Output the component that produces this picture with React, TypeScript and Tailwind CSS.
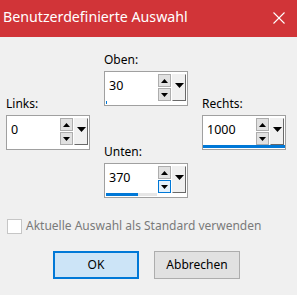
import React from "react";

const font = { fontFamily: '"Noto Sans", "Open Sans", sans-serif' };

function UpTri() {
  return (
    <svg width="7" height="4" viewBox="0 0 7 4">
      <polygon points="0,4 7,4 3.5,0" fill="#000" />
    </svg>
  );
}
function DownTri() {
  return (
    <svg width="7" height="4" viewBox="0 0 7 4">
      <polygon points="0,0 7,0 3.5,4" fill="#000" />
    </svg>
  );
}
function BigDownTri() {
  return (
    <svg width="9" height="5" viewBox="0 0 9 5">
      <polygon points="0,0 9,0 4.5,5" fill="#000" />
    </svg>
  );
}

type SpinProps = {
  label: string;
  value: string;
  bar: "none" | "tiny" | "partial" | "full";
  hoverDown?: boolean;
};

function Spin({ label, value, bar, hoverDown }: SpinProps) {
  return (
    <div className="flex flex-col w-[84px]">
      <div className="h-[15px] leading-[15px] text-[12px] text-black mb-[4px]">{label}</div>
      <div className="h-[35px] border border-[#a0a0a0] bg-white flex flex-col">
        <div className="flex flex-row pt-[2px] h-[29px]">
          <div className="flex-1 flex items-center pl-[4px] text-[12.5px] text-black leading-none pb-[2px]">
            {value}
          </div>
          <div className="flex flex-col gap-[1px] w-[13px]">
            <div className="h-[13px] bg-[#e1e1e1] border border-[#adadad] flex items-center justify-center">
              <UpTri />
            </div>
            <div
              className={
                hoverDown
                  ? "h-[13px] bg-[#e5f1fb] border border-[#0078d7] flex items-center justify-center"
                  : "h-[13px] bg-[#e1e1e1] border border-[#adadad] flex items-center justify-center"
              }
            >
              <DownTri />
            </div>
          </div>
          <div className="w-[14px] h-[27px] ml-[1px] mr-[1px] bg-[#f0f0f0] border-r border-b border-r-[#696969] border-b-[#696969] border-l border-t border-l-[#f0f0f0] border-t-[#f0f0f0] flex justify-center pt-[8px]">
            <BigDownTri />
          </div>
        </div>
        <div className="h-[3px] flex flex-row">
          {bar === "full" && <div className="flex-1 bg-[#0078d7]" />}
          {bar === "partial" && (
            <div className="w-[51px] flex flex-row ml-[1px]">
              <div className="w-[32px] bg-[#0078d7]" />
              <div className="flex-1 bg-[#e6e6e6]" />
            </div>
          )}
          {bar === "tiny" && <div className="w-[1px] ml-[1px] bg-[#0078d7]" />}
        </div>
      </div>
    </div>
  );
}

export default function App() {
  return (
    <div className="w-[297px] h-[295px] bg-[#f0f0f0] flex flex-col overflow-hidden" style={font}>
      <div className="h-[37px] bg-[#d13438] flex flex-row items-center pl-[3px] pr-[12px] shrink-0">
        <div className="flex-1 text-white text-[14.2px] leading-none pb-[2px]">Benutzerdefinierte Auswahl</div>
        <svg width="12" height="12" viewBox="0 0 12 12" className="mb-[1px]">
          <line x1="0.5" y1="0.5" x2="11.5" y2="11.5" stroke="#fff" strokeWidth="1.1" />
          <line x1="11.5" y1="0.5" x2="0.5" y2="11.5" stroke="#fff" strokeWidth="1.1" />
        </svg>
      </div>
      <div className="flex flex-row pl-[6px] pt-[15px] gap-[14px] items-start">
        <div className="mt-[44px]">
          <Spin label="Links:" value="0" bar="none" />
        </div>
        <div className="flex flex-col gap-[38px]">
          <Spin label="Oben:" value="30" bar="tiny" />
          <Spin label="Unten:" value="370" bar="partial" hoverDown />
        </div>
        <div className="mt-[44px]">
          <Spin label="Rechts:" value="1000" bar="full" />
        </div>
      </div>
      <div className="flex flex-row items-center pl-[7px] mt-[20px] h-[16px]">
        <div className="w-[15px] h-[15px] border border-[#c6c6c6] bg-white" />
        <div className="ml-[4px] text-[12px] text-[#7a7a7a] leading-none">
          Aktuelle Auswahl als Standard verwenden
        </div>
      </div>
      <div className="flex flex-row pl-[53px] gap-[15px] mt-[17px]">
        <div className="w-[86px] h-[28px] bg-[#cce4f7] border-2 border-[#0078d7] flex items-center justify-center text-[12px] text-black">
          OK
        </div>
        <div className="w-[86px] h-[28px] bg-[#e1e1e1] border border-[#adadad] flex items-center justify-center text-[12px] text-black">
          Abbrechen
        </div>
      </div>
    </div>
  );
}
